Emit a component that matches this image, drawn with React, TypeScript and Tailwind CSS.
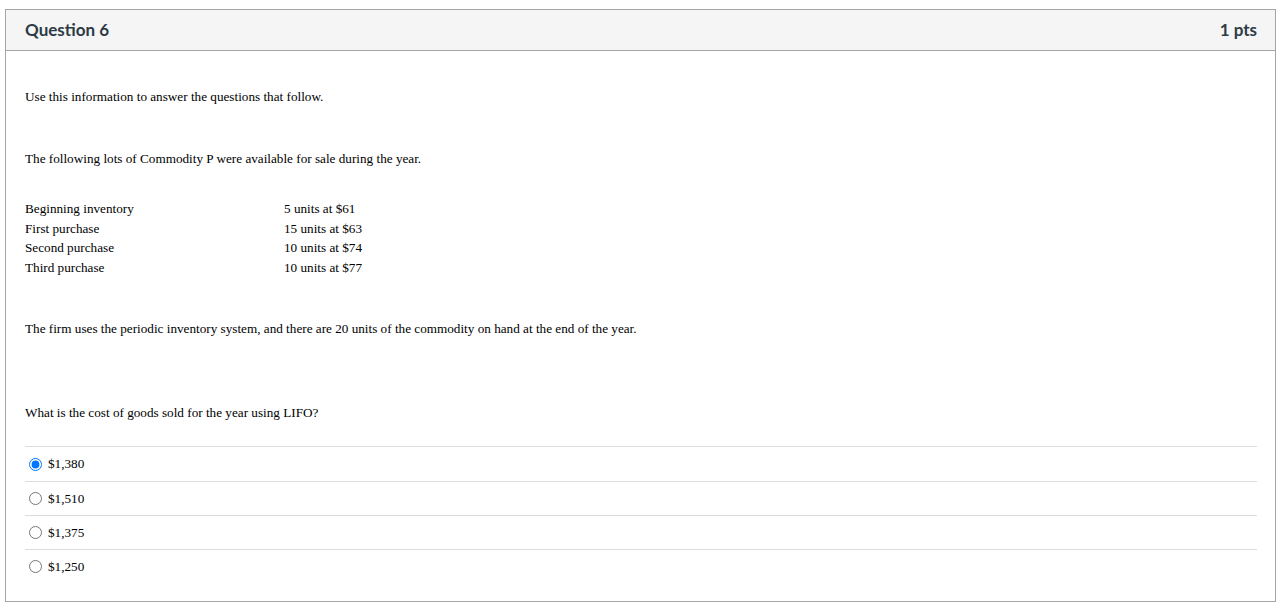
import React from 'react';

const rows = [
    ['Beginning inventory', '5 units at $61'],
    ['First purchase', '15 units at $63'],
    ['Second purchase', '10 units at $74'],
    ['Third purchase', '10 units at $77'],
];

const answers = ['$1,380', '$1,510', '$1,375', '$1,250'];

export default function App() {
    return (
        <div className="bg-white min-h-screen pt-[9px] px-[5px]">
            <div className="w-[1271px] border border-[#a5a5a5]">
                <div className="h-[41px] bg-[#f5f5f5] border-b border-[#a5a5a5] flex items-center justify-between pl-[19px] pr-[18px] font-['Lato',sans-serif] font-bold text-[17px] text-[#2d3b45]">
                    <span>Question 6</span>
                    <span>1 pts</span>
                </div>
                <div className="pl-[19px] pr-[18px] pt-[36px] pb-[18px] font-['Liberation_Serif','Times_New_Roman',serif] text-[13.2px] leading-[20px] text-black">
                    <p>Use this information to answer the questions that follow.</p>
                    <p className="mt-[42px]">The following lots of Commodity P were available for sale during the year.</p>
                    <table className="mt-[30px] leading-[19.5px]">
                        <tbody>
                            {rows.map(([a, b]) => (
                                <tr key={a}>
                                    <td className="w-[259px] p-0">{a}</td>
                                    <td className="p-0">{b}</td>
                                </tr>
                            ))}
                        </tbody>
                    </table>
                    <p className="mt-[42px]">The firm uses the periodic inventory system, and there are 20 units of the commodity on hand at the end of the year.</p>
                    <p className="mt-[64px]">What is the cost of goods sold for the year using LIFO?</p>
                    <div className="mt-[23px]">
                        {answers.map((a, i) => (
                            <label
                                key={a}
                                className={`flex items-center gap-[6px] border-t border-[#dcdcdc] pl-[4px] box-border ${i === 0 ? 'h-[35px]' : 'h-[34px]'}`}
                            >
                                <input type="radio" name="q6" defaultChecked={i === 0} className="m-0 w-[13px] h-[13px]" />
                                <span>{a}</span>
                            </label>
                        ))}
                    </div>
                </div>
            </div>
        </div>
    );
}
